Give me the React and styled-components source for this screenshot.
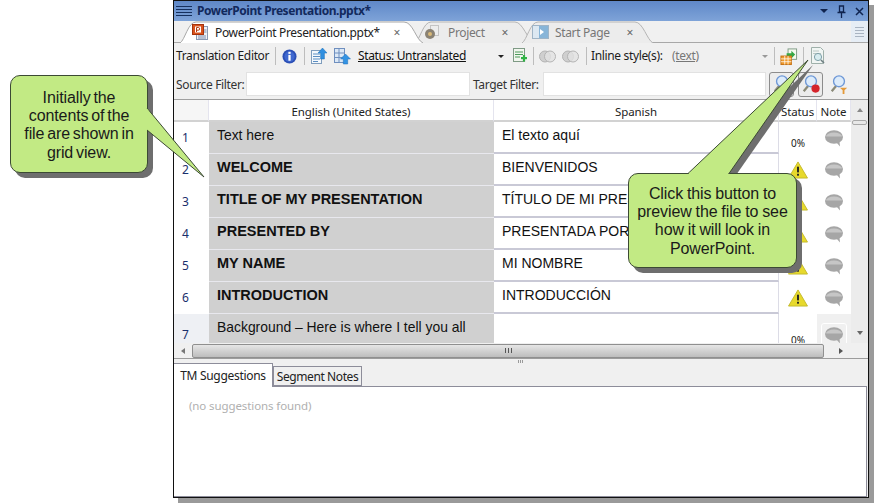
import React from 'react';
import styled, { createGlobalStyle } from 'styled-components';

const GlobalStyle = createGlobalStyle`
  html, body { margin: 0; padding: 0; background: #fff; }
  body { font-family: "Noto Sans", "Liberation Sans", sans-serif; }
`;

const Page = styled.div`
  position: relative;
  width: 874px;
  height: 504px;
  overflow: hidden;
  background: #fff;
  padding: 0 0 0 173px;
  box-sizing: border-box;
`;

const Win = styled.div`
  width: 696px;
  height: 498px;
  box-sizing: border-box;
  border: 1px solid #111;
  background: #f0f0f0;
  box-shadow: 5px 5px 0 #9a9a9a;
  display: flex;
  flex-direction: column;
  overflow: hidden;
`;

const TitleBar = styled.div`
  height: 20px;
  flex: none;
  display: flex;
  align-items: center;
  padding: 0 4px 0 2px;
  background: linear-gradient(#5f88c8, #7ea3d8);
`;

const Grip = styled.div`
  width: 16px;
  height: 10px;
  margin-right: 5px;
  background: repeating-linear-gradient(#16305e 0 1px, transparent 1px 3px);
`;

const TitleText = styled.div`
  flex: 1;
  font: bold 12px "Noto Sans", sans-serif;
  letter-spacing: -0.45px;
  color: #12295c;
  white-space: nowrap;
  padding-bottom: 2px;
`;

const TitleBtns = styled.div`
  display: flex;
  align-items: center;
  gap: 9px;
  color: #10244f;
`;

const TabStrip = styled.div`
  height: 22px;
  flex: none;
  display: flex;
  align-items: flex-end;
  background: #f0f0f0;
  border-bottom: 1px solid #a8a8a8;
  box-sizing: border-box;
  padding-left: 6px;
`;

const Tab = styled.div`
  position: relative;
  height: 21px;
  width: ${p => p.$w}px;
  margin-left: ${p => p.$ml || 0}px;
  display: flex;
  align-items: center;
  padding: 1px 0 0 ${p => p.$pl}px;
  box-sizing: border-box;
  font-size: 12px;
  letter-spacing: -0.35px;
  color: ${p => (p.$active ? '#222' : '#777')};
  z-index: ${p => p.$z};
  & > span, & > svg.ic { position: relative; }
`;

const TabShape = styled.svg`
  position: absolute;
  left: 0;
  top: 0;
  width: 100%;
  height: 22px;
`;

const TabLabel = styled.span`
  flex: 1;
  white-space: nowrap;
  margin-left: ${p => p.$ml}px;
`;

const TabClose = styled.span`
  font-size: 12px;
  color: #666;
  margin-right: ${p => p.$mr}px;
`;

const StripSpacer = styled.div`
  flex: 1;
`;

const StripMenu = styled.div`
  width: 17px;
  height: 21px;
  background: #e6edf5;
  display: flex;
  flex-direction: column;
  gap: 2px;
  align-items: center;
  justify-content: center;
  & > i {
    display: block;
    width: 9px;
    border-top: 1px solid #a9b4c2;
  }
`;

const Toolbar = styled.div`
  height: 26px;
  flex: none;
  display: flex;
  align-items: center;
  padding-left: 2px;
  font-size: 12px;
  letter-spacing: -0.35px;
  color: #1c1c1c;
  white-space: nowrap;
`;

const ToolbarLabel = styled.span`
  width: ${p => p.$w}px;
  flex: none;
  padding-bottom: 2px;
`;

const Sep = styled.div`
  width: 1px;
  height: 18px;
  flex: none;
  background: #bdbdbd;
  margin: 0 ${p => p.$r}px 0 ${p => p.$l}px;
`;

const IconSlot = styled.div`
  display: flex;
  align-items: center;
  flex: none;
  margin: 0 ${p => p.$r || 0}px 0 ${p => p.$l || 0}px;
`;

const StatusLink = styled.span`
  color: #111;
  text-decoration: underline;
  margin: 0 0 2px 7px;
  width: 140px;
  flex: none;
`;

const Caret = styled.span`
  width: 0;
  height: 0;
  flex: none;
  border-left: ${p => p.$s || 3}px solid transparent;
  border-right: ${p => p.$s || 3}px solid transparent;
  border-top: ${p => p.$s || 3}px solid ${p => p.$c || '#222'};
`;

const InlineStyle = styled.span`
  color: #777;
  text-decoration: underline;
  margin: 0 0 2px 9px;
  width: 90px;
  flex: none;
`;

const FilterBar = styled.div`
  height: 31px;
  flex: none;
  display: flex;
  align-items: center;
  padding-left: 2px;
  font-size: 12px;
  letter-spacing: -0.35px;
  color: #333;
  white-space: nowrap;
  border-bottom: 1px solid #a0a0a0;
  box-sizing: border-box;
`;

const FilterLabel = styled.span`
  width: 70px;
  flex: none;
`;

const FilterInput = styled.div`
  width: ${p => p.$w}px;
  height: 24px;
  flex: none;
  background: #fff;
  border: 1px solid #e2e2e2;
  box-sizing: border-box;
  margin-right: 3px;
`;

const SearchBtn = styled.div`
  width: 25px;
  height: 25px;
  flex: none;
  border: 1px solid #8c8c8c;
  border-radius: 3px;
  background: #ececec;
  box-sizing: border-box;
  margin-left: ${p => p.$ml || 0}px;
  display: flex;
  align-items: center;
  justify-content: center;
`;

const GridArea = styled.div`
  height: 258px;
  flex: none;
  display: flex;
  flex-direction: column;
  background: #fff;
`;

const GridMain = styled.div`
  flex: 1;
  min-height: 0;
  display: flex;
`;

const Table = styled.div`
  width: 677px;
  height: 243px;
  overflow: hidden;
  flex: none;
`;

const Row = styled.div`
  display: grid;
  grid-template-columns: 35px 285px 285px 38px 34px;
  height: ${p => p.$h}px;
`;

const HeadCell = styled.div`
  font-size: 11.5px;
  letter-spacing: -0.1px;
  color: #222;
  display: flex;
  align-items: center;
  justify-content: center;
  padding-top: 2px;
  background: ${p => (p.$blank ? '#f6f6f6' : '#fff')};
  border-right: 1px solid #e4e4ee;
  border-bottom: 2px solid #d2d2d2;
  box-sizing: border-box;
  white-space: nowrap;
  overflow: hidden;
`;

const RowNum = styled.div`
  background: ${p => (p.$current ? '#eef0f4' : '#fff')};
  color: #1a2f6c;
  font-size: 12px;
  display: flex;
  align-items: center;
  padding: 0 0 2px 8px;
  box-sizing: border-box;
`;

const SourceCell = styled.div`
  background: #d0d0d0;
  border-bottom: 1px solid #e8e8ee;
  box-sizing: border-box;
  font: ${p => (p.$bold ? 'bold 14.5px' : 'normal 13.9px')} "Liberation Sans", Arial, sans-serif;
  color: #111;
  padding: 5px 0 0 8px;
  white-space: nowrap;
  overflow: hidden;
`;

const TargetCell = styled(SourceCell)`
  background: #fff;
  font-weight: normal;
  font-size: 14px;
  border-bottom: 2px solid #c9c9d6;
  border-right: 1px solid #dcdce6;
`;

const StatusCell = styled.div`
  display: flex;
  justify-content: center;
  align-items: center;
  font-size: 10px;
  color: #222;
  box-sizing: border-box;
`;

const Percent = styled.span`
  margin-top: 10px;
`;

const NoteCell = styled.div`
  display: flex;
  justify-content: center;
  align-items: center;
  box-sizing: border-box;
  background: ${p => (p.$current ? '#f0f0f0' : '#fff')};
`;

const NoteBox = styled.div`
  display: flex;
  padding: 3px;
  border: 1px solid ${p => (p.$current ? '#fff' : 'transparent')};
  border-radius: 3px;
`;

const VScroll = styled.div`
  width: 17px;
  flex: none;
  background: #ececec;
  display: flex;
  flex-direction: column;
  align-items: center;
  height: 243px;
`;

const VThumb = styled.div`
  width: 15px;
  height: 5px;
  margin-top: 1px;
  background: #e8e8e8;
  border: 1px solid #a8a8a8;
  border-radius: 2px;
  box-sizing: border-box;
`;

const ArrowBox = styled.div`
  height: ${p => p.$h}px;
  width: 100%;
  flex: none;
  display: flex;
  align-items: center;
  justify-content: center;
  margin-top: ${p => (p.$auto ? 'auto' : 0)};
  margin-bottom: ${p => p.$mb || 0}px;
`;

const HScroll = styled.div`
  height: 15px;
  flex: none;
  display: flex;
  align-items: center;
  background: #f0f0f0;
`;

const HThumb = styled.div`
  width: 632px;
  height: 14px;
  flex: none;
  border: 1px solid #8f8f8f;
  border-radius: 2px;
  box-sizing: border-box;
  background: linear-gradient(#e6e6e6, #cfcfcf 55%, #bdbdbd);
  display: flex;
  align-items: center;
  justify-content: center;
  & > i {
    display: block;
    width: 1px;
    height: 5px;
    background: #555;
    margin: 0 1px;
  }
`;

const Arrow = styled.span`
  width: 0;
  height: 0;
  ${p => p.$dir === 'up' && `border-left:3px solid transparent;border-right:3px solid transparent;border-bottom:4px solid ${p.$c};`}
  ${p => p.$dir === 'down' && `border-left:3px solid transparent;border-right:3px solid transparent;border-top:4px solid ${p.$c};`}
  ${p => p.$dir === 'left' && `border-top:3px solid transparent;border-bottom:3px solid transparent;border-right:4px solid ${p.$c};`}
  ${p => p.$dir === 'right' && `border-top:3px solid transparent;border-bottom:3px solid transparent;border-left:4px solid ${p.$c};`}
`;

const HLeft = styled.div`
  width: 18px;
  flex: none;
  display: flex;
  justify-content: center;
`;

const HRight = styled.div`
  width: 22px;
  margin-left: 6px;
  flex: none;
  display: flex;
  justify-content: center;
`;

const Splitter = styled.div`
  height: 4px;
  flex: none;
  border-top: 1px solid #9c9c9c;
  background: #f0f0f0;
  display: flex;
  justify-content: center;
  align-items: center;
  gap: 1px;
  padding-right: 2px;
  & > i {
    display: block;
    width: 1px;
    height: 3px;
    background: #9a9a9a;
  }
`;

const BottomTabs = styled.div`
  height: 23px;
  flex: none;
  display: flex;
  align-items: flex-end;
  position: relative;
  z-index: 1;
`;

const BottomTab = styled.div`
  font-size: 12px;
  letter-spacing: ${p => (p.$active ? -0.3 : -0.4)}px;
  color: #222;
  white-space: nowrap;
  box-sizing: border-box;
  height: ${p => (p.$active ? 24 : 20)}px;
  margin-bottom: ${p => (p.$active ? -1 : 0)}px;
  width: ${p => p.$w}px;
  background: ${p => (p.$active ? '#fff' : '#f0f0f0')};
  border: 1px solid #8d8d9a;
  border-bottom: ${p => (p.$active ? 'none' : '1px solid #8d8d9a')};
  border-left: ${p => (p.$active ? 'none' : '1px solid #8d8d9a')};
  display: flex;
  align-items: center;
  justify-content: center;
`;

const BottomPanel = styled.div`
  flex: 1;
  background: #fff;
  border: 1px solid #8d8d9a;
  border-left: none;
  margin-right: 1px;
  padding: 11px 0 0 15px;
  font-size: 11.5px;
  letter-spacing: -0.1px;
  color: #b0b0b0;
`;

const Callout = styled.div`
  position: absolute;
  left: ${p => p.$x}px;
  top: ${p => p.$y}px;
  width: ${p => p.$w}px;
  height: ${p => p.$h}px;
  box-sizing: border-box;
  background: #c2ea84;
  border: 1.5px solid #3c4a34;
  border-radius: 10px;
  box-shadow: 5px 5px 0 #6e6e6e;
  font: 16px/18.2px "Liberation Sans", Arial, sans-serif;
  color: #1a1a1a;
  text-align: center;
  white-space: nowrap;
  padding-top: ${p => p.$pt}px;
  word-spacing: ${p => p.$ws}px;
  letter-spacing: -0.1px;
  z-index: 5;
`;

const Tail = styled.svg`
  position: absolute;
  left: 0;
  top: 0;
  width: 874px;
  height: 504px;
  z-index: ${p => p.$z};
  pointer-events: none;
`;

const rows = [
  ['Text here', 'El texto aquí', false],
  ['WELCOME', 'BIENVENIDOS', true],
  ['TITLE OF MY PRESENTATION', 'TÍTULO DE MI PRESENTACIÓN', true],
  ['PRESENTED BY', 'PRESENTADA POR', true],
  ['MY NAME', 'MI NOMBRE', true],
  ['INTRODUCTION', 'INTRODUCCIÓN', true],
  ['Background – Here is where I tell you all', '', false],
];

const PptIcon = () => (
  <svg className="ic" width="17" height="17" viewBox="0 0 17 17">
    <rect x="4.500" y="2.500" width="11" height="13" fill="#eef2f8" stroke="#8a9ab5" />
    <path d="M6 12h8M6 14h8M12 6h2.500M12 8h2.500" stroke="#7a8cb0" />
    <rect x=".5" y=".5" width="11" height="10" fill="#d9531e" stroke="#a5330d" />
    <rect x="3" y="2.500" width="6" height="6" fill="#fff" />
    <path d="M4.500 8V3.500h1.800a1.300 1.300 0 0 1 0 2.700H4.500" fill="none" stroke="#b23a10" />
  </svg>
);

const ProjectIcon = () => (
  <svg className="ic" width="16" height="16" viewBox="0 0 16 16">
    <rect x="6.500" y="1.500" width="8" height="10" fill="#ededed" stroke="#c4c4c4" />
    <circle cx="6" cy="10" r="5" fill="#8a8274" />
    <circle cx="6" cy="10" r="2" fill="#d9b978" />
  </svg>
);

const StartIcon = () => (
  <svg className="ic" width="17" height="14" viewBox="0 0 17 14">
    <rect x=".5" y=".5" width="16" height="13" fill="#dce8f2" stroke="#9fb4c6" />
    <rect x="7" y="1" width="9" height="12" fill="#88b5d8" />
    <path d="M8 4l4 3-4 3z" fill="#fff" />
  </svg>
);

const InfoIcon = () => (
  <svg width="15" height="15" viewBox="0 0 16 16">
    <circle cx="8" cy="8" r="7.500" fill="#2b4fb5" />
    <circle cx="8" cy="8" r="5.500" fill="#3f68d0" />
    <rect x="6.800" y="3" width="2.400" height="2.200" fill="#fff" />
    <rect x="6.800" y="6.300" width="2.400" height="6.200" fill="#fff" />
  </svg>
);

const DocUpIcon = () => (
  <svg width="18" height="18" viewBox="0 0 18 18">
    <rect x="1.500" y="3.500" width="10" height="13" fill="#f4f8fc" stroke="#7f9dbd" />
    <path d="M3 7h7M3 9.500h7M3 12h7M3 14.500h5" stroke="#5b8ec2" />
    <path d="M12.500 1l4.500 5h-2.600v6h-3.800V6H8z" fill="#2f8fe0" stroke="#1b6cb5" strokeWidth=".5" />
  </svg>
);

const GridUpIcon = () => (
  <svg width="18" height="18" viewBox="0 0 18 18">
    <rect x="1.500" y="1.500" width="10" height="14" fill="#dbe8f6" stroke="#6f8fbf" />
    <path d="M1.500 6h10M1.500 10.500h10M6 1.500v14" stroke="#6f8fbf" />
    <path d="M12.500 7l5 5h-2.800v5h-4.400v-5H7.500z" fill="#3393e3" stroke="#1c6fb8" strokeWidth=".5" />
  </svg>
);

const AddDocIcon = () => (
  <svg width="16" height="18" viewBox="0 0 16 18">
    <rect x="1.500" y="1.500" width="11" height="13" fill="#f1f6ee" stroke="#7f9a85" />
    <path d="M3 5h8M3 7.500h8M3 10h5" stroke="#4c9a5a" />
    <rect x="9" y="10" width="6" height="2.200" fill="#2fb344" />
    <rect x="10.900" y="8" width="2.200" height="6.500" fill="#2fb344" />
  </svg>
);

const RingsIcon = () => (
  <svg width="17" height="13" viewBox="0 0 17 13">
    <circle cx="6" cy="6.500" r="5.500" fill="#cfcfcf" stroke="#b4b4b4" />
    <circle cx="11" cy="6.500" r="5.500" fill="#e2e2e2" fillOpacity=".8" stroke="#b4b4b4" />
  </svg>
);

const ExportIcon = () => (
  <svg width="18" height="19" viewBox="0 0 19 19">
    <rect x="8.500" y="1.500" width="9" height="11" fill="#f5fbf0" stroke="#7f9a85" />
    <path d="M7 6h5V3.500L16 7.500l-4 4V9H7z" fill="#35a845" />
    <rect x="1" y="9" width="11" height="9" fill="#ef9a2c" stroke="#c46f11" />
    <path d="M1 12h11M1 15h11M5 9v9M8.500 9v9" stroke="#fff" strokeWidth=".8" />
  </svg>
);

const PreviewIcon = () => (
  <svg width="17" height="20" viewBox="0 0 17 20">
    <path d="M1.500 1.500h9l3 3v13h-12z" fill="#f0f5f3" stroke="#9fb0aa" />
    <path d="M3 5h6M3 7.500h8" stroke="#bcc9c5" />
    <circle cx="8" cy="11" r="3.600" fill="#d7ecef" stroke="#7fa0a8" />
    <path d="M11 14l3 3" stroke="#6f7f83" strokeWidth="1.600" />
  </svg>
);

const Lens = ({ handle, badge }) => (
  <svg width="20" height="20" viewBox="0 0 22 22">
    <path d="M8 13l-5 6" stroke="#8a8a78" strokeWidth="2.500" />
    {handle && <path d="M12 15h8l-3 3v4h-2v-4z" fill={handle} />}
    <circle cx="11" cy="8" r="6" fill="#dcebfa" stroke="#6d97d6" strokeWidth="1.500" />
    {badge && <circle cx="16" cy="16" r="4.500" fill={badge} />}
  </svg>
);

const Warning = () => (
  <svg width="20" height="18" viewBox="0 0 21 19">
    <path d="M10.500 1L20.500 18H.5z" fill="#e7d92c" stroke="#c4b92a" />
    <rect x="9.500" y="6" width="2" height="6" fill="#222" />
    <rect x="9.500" y="13.500" width="2" height="2" fill="#222" />
  </svg>
);

const Bubble = () => (
  <svg width="18" height="17" viewBox="0 0 18 17">
    <ellipse cx="9" cy="7" rx="9" ry="6.800" fill="#a6a6a6" />
    <path d="M1 6.500h16a8 4 0 0 0-16 0z" fill="#c6c6c6" />
    <path d="M11.500 12.500l3.500 4-.5-5z" fill="#a6a6a6" />
  </svg>
);

export default function App() {
  return (
    <Page>
      <GlobalStyle />
      <Win>
        <TitleBar>
          <Grip />
          <TitleText>PowerPoint Presentation.pptx*</TitleText>
          <TitleBtns>
            <Caret $c="#10244f" $s={4} />
            <svg width="9" height="13" viewBox="0 0 9 13">
              <path d="M2.500 1h4v6h-4zM.5 7.500h8M4.500 8v5" fill="none" stroke="#10244f" strokeWidth="1.300" />
            </svg>
            <svg width="9" height="9" viewBox="0 0 9 9">
              <path d="M1 1l7 7M8 1L1 8" stroke="#10244f" strokeWidth="1.500" />
            </svg>
          </TitleBtns>
        </TitleBar>

        <TabStrip>
          <Tab $active $w={243} $pl={12} $z={3}>
            <TabShape viewBox="0 0 243 22" preserveAspectRatio="none">
              <path d="M0 22C5 19 8 1 16 1H224C233 1 236 19 243 22" fill="#fff" stroke="#a8a8a8" />
            </TabShape>
            <PptIcon />
            <TabLabel $ml={6}>PowerPoint Presentation.pptx*</TabLabel>
            <TabClose $mr={23}>×</TabClose>
          </Tab>
          <Tab $w={120} $ml={-8} $pl={9} $z={1}>
            <TabShape viewBox="0 0 120 22" preserveAspectRatio="none">
              <path d="M0 22C5 19 8 1 16 1H100C108 1 112 19 120 22" fill="#ececec" stroke="#b5b5b5" />
            </TabShape>
            <ProjectIcon />
            <TabLabel $ml={8}>Project</TabLabel>
            <TabClose $mr={27}>×</TabClose>
          </Tab>
          <Tab $w={131} $ml={-13} $pl={10} $z={2}>
            <TabShape viewBox="0 0 131 22" preserveAspectRatio="none">
              <path d="M0 22C5 19 8 1 16 1H113C121 1 125 19 131 22" fill="#ececec" stroke="#b5b5b5" />
            </TabShape>
            <StartIcon />
            <TabLabel $ml={6}>Start Page</TabLabel>
            <TabClose $mr={20}>×</TabClose>
          </Tab>
          <StripSpacer />
          <StripMenu><i /><i /><i /><i /></StripMenu>
        </TabStrip>

        <Toolbar>
          <ToolbarLabel $w={92}>Translation Editor</ToolbarLabel>
          <Sep $l={7} $r={6} />
          <InfoIcon />
          <Sep $l={7} $r={5} />
          <DocUpIcon />
          <IconSlot $l={5}><GridUpIcon /></IconSlot>
          <StatusLink>Status: Untranslated</StatusLink>
          <Caret />
          <IconSlot $l={8}><AddDocIcon /></IconSlot>
          <Sep $l={5} $r={5} />
          <RingsIcon />
          <IconSlot $l={6}><RingsIcon /></IconSlot>
          <Sep $l={7} $r={4} />
          <ToolbarLabel $w={72}>Inline style(s):</ToolbarLabel>
          <InlineStyle>(text)</InlineStyle>
          <Caret $c="#999" />
          <Sep $l={6} $r={5} />
          <ExportIcon />
          <Sep $l={5} $r={6} />
          <PreviewIcon />
        </Toolbar>

        <FilterBar>
          <FilterLabel>Source Filter:</FilterLabel>
          <FilterInput $w={224} />
          <FilterLabel>Target Filter:</FilterLabel>
          <FilterInput $w={223} />
          <SearchBtn><Lens badge="#2d8a3a" /></SearchBtn>
          <SearchBtn $ml={4}><Lens badge="#d4242b" /></SearchBtn>
          <IconSlot $l={6}><Lens handle="#e49a3a" /></IconSlot>
        </FilterBar>

        <GridArea>
          <GridMain>
            <Table>
              <Row $h={22}>
                <HeadCell $blank />
                <HeadCell>English (United States)</HeadCell>
                <HeadCell>Spanish</HeadCell>
                <HeadCell>Status</HeadCell>
                <HeadCell>Note</HeadCell>
              </Row>
              {rows.map((r, i) => (
                <Row key={r[0]} $h={i === 6 ? 42 : 32}>
                  <RowNum $current={i === 6}>{i + 1}</RowNum>
                  <SourceCell $bold={r[2]}>{r[0]}</SourceCell>
                  <TargetCell>{r[1]}</TargetCell>
                  <StatusCell>
                    {i === 0 || i === 6 ? <Percent>0%</Percent> : <Warning />}
                  </StatusCell>
                  <NoteCell $current={i === 6}>
                    <NoteBox $current={i === 6}><Bubble /></NoteBox>
                  </NoteCell>
                </Row>
              ))}
            </Table>
            <VScroll>
              <ArrowBox $h={19}><Arrow $dir="up" $c="#888" /></ArrowBox>
              <VThumb />
              <ArrowBox $h={14} $auto $mb={3}><Arrow $dir="down" $c="#666" /></ArrowBox>
            </VScroll>
          </GridMain>
          <HScroll>
            <HLeft><Arrow $dir="left" $c="#777" /></HLeft>
            <HThumb><i /><i /><i /></HThumb>
            <HRight><Arrow $dir="right" $c="#555" /></HRight>
          </HScroll>
        </GridArea>

        <Splitter><i /><i /><i /></Splitter>

        <BottomTabs>
          <BottomTab $active $w={99}>TM Suggestions</BottomTab>
          <BottomTab $w={89}>Segment Notes</BottomTab>
        </BottomTabs>
        <BottomPanel>(no suggestions found)</BottomPanel>
      </Win>

      <Tail $z={4} viewBox="0 0 874 504">
        <path d="M688 173L808 60L729 173z" fill="#6e6e6e" transform="translate(5 5)" />
      </Tail>
      <Callout $x={10} $y={75} $w={138} $h={98} $pt={13} $ws={-1.5}>
        Initially the<br />contents of the<br />file are shown in<br />grid view.
      </Callout>
      <Callout $x={628} $y={173} $w={169} $h={95} $pt={11} $ws={-0.5}>
        Click this button to<br />preview the file to see<br />how it will look in<br />PowerPoint.
      </Callout>
      <Tail $z={6} viewBox="0 0 874 504">
        <path d="M147 108L204 177L147 130" fill="#c2ea84" stroke="#3c4a34" strokeWidth="1" />
        <path d="M147 109.500V129" stroke="#c2ea84" strokeWidth="2.500" />
        <path d="M688 173.500L808 60L729 173.500" fill="#c2ea84" stroke="#3c4a34" strokeWidth="1" />
        <path d="M689 174H728" stroke="#c2ea84" strokeWidth="2.500" />
      </Tail>
    </Page>
  );
}
